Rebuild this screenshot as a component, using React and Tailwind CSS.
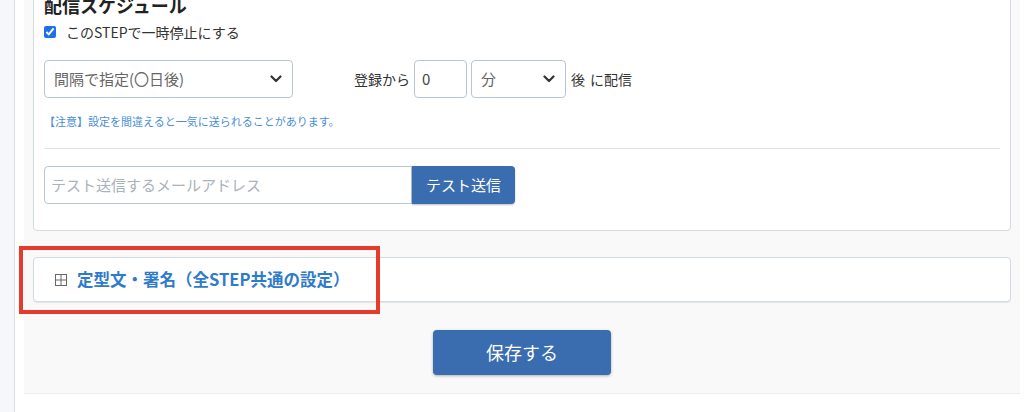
import React from "react";

const font = { fontFamily: '"Noto Sans CJK JP", "Noto Sans", sans-serif' };

const Chevron = () => (
  <svg width="12" height="8" viewBox="0 0 12 8" className="shrink-0">
    <path d="M1.5 1.5 L6 6 L10.5 1.5" fill="none" stroke="#333" strokeWidth="2.2" strokeLinecap="round" strokeLinejoin="round" />
  </svg>
);

const App = () => {
  return (
    <div className="flex h-[412px] w-[1024px] overflow-hidden bg-white text-[#333]" style={font}>
      {/* left rail */}
      <div className="w-[15px] shrink-0 bg-[#f5f7fa] border-r border-[#d5dee8]" />

      <div className="ml-[9px] w-[996px] shrink-0 h-[394px] bg-[#f9f9fa] border-b border-[#eeeeef] px-[9px] relative">
        {/* schedule card */}
        <div className="-mt-[12px] bg-white border border-[#d3dbe2] rounded-[4px] pl-[10px] pr-[10px] pb-[26px]">
          <h3 className="text-[18px] font-bold leading-[27px] pt-[3px] text-[#222]">配信スケジュール</h3>
          <label className="flex items-center gap-[10px] mt-[3px] h-[20px] text-[14px] text-[#333]">
            <input type="checkbox" defaultChecked className="w-[12px] h-[12px] accent-[#1e6fe8]" />
            このSTEPで一時停止にする
          </label>

          <div className="flex items-center mt-[18px]">
            <div className="w-[249px] h-[38px] border border-[#b9c6d1] rounded-[4px] flex items-center justify-between pl-[9px] pr-[10px] text-[15px] text-[#666]">
              <span>間隔で指定(〇日後)</span>
              <Chevron />
            </div>
            <span className="ml-[61px] text-[14px] text-[#333]">登録から</span>
            <div className="ml-[4px] w-[53px] h-[38px] border border-[#b9c6d1] rounded-[4px] flex items-center pl-[7px] text-[15px] text-[#444]">0</div>
            <div className="ml-[4px] w-[95px] h-[38px] border border-[#b9c6d1] rounded-[4px] flex items-center justify-between pl-[9px] pr-[10px] text-[15px] text-[#666]">
              <span>分</span>
              <Chevron />
            </div>
            <span className="ml-[5px] text-[14px] text-[#333]">後</span>
            <span className="ml-[5px] text-[14px] text-[#333]">に配信</span>
          </div>

          <p className="mt-[16px] text-[11px] leading-[14px] text-[#4a8fd6]">【注意】設定を間違えると一気に送られることがあります。</p>

          <div className="mt-[20px] border-t border-[#dde4ea]" />

          <div className="flex mt-[17px]">
            <div className="w-[368px] h-[38px] border border-[#b9c6d1] rounded-l-[4px] flex items-center pl-[6px] text-[15px] text-[#aab2ba]">
              テスト送信するメールアドレス
            </div>
            <button className="w-[103px] h-[38px] bg-[#3a6cb0] text-white text-[15px] rounded-r-[4px] shadow-[0_1px_2px_rgba(0,0,0,0.25)]">
              テスト送信
            </button>
          </div>
        </div>

        {/* template card */}
        <div className="mt-[26px] h-[45px] bg-white border border-[#d3dbe2] rounded-[4px] shadow-[0_1px_1px_rgba(0,0,0,0.08)] flex items-center pl-[21px]">
          <svg width="12" height="12" viewBox="0 0 12 12" className="shrink-0">
            <rect x="0.5" y="0.5" width="11" height="11" fill="none" stroke="#666" />
            <path d="M6 1 V11 M1 6 H11" stroke="#666" />
          </svg>
          <span className="ml-[10px] text-[16.5px] font-bold text-[#2f7bcb]">定型文・署名（全STEP共通の設定）</span>
        </div>

        <div className="flex justify-center mt-[28px]">
          <button className="w-[178px] h-[45px] bg-[#3a6cb0] text-white text-[18px] rounded-[4px] shadow-[0_1px_3px_rgba(0,0,0,0.3)]">
            保存する
          </button>
        </div>

        {/* annotation */}
        <div className="absolute left-[-5px] top-[246px] w-[361px] h-[68px] border-[4px] border-[#e63a2a] pointer-events-none" />
      </div>
    </div>
  );
};

export default App;
